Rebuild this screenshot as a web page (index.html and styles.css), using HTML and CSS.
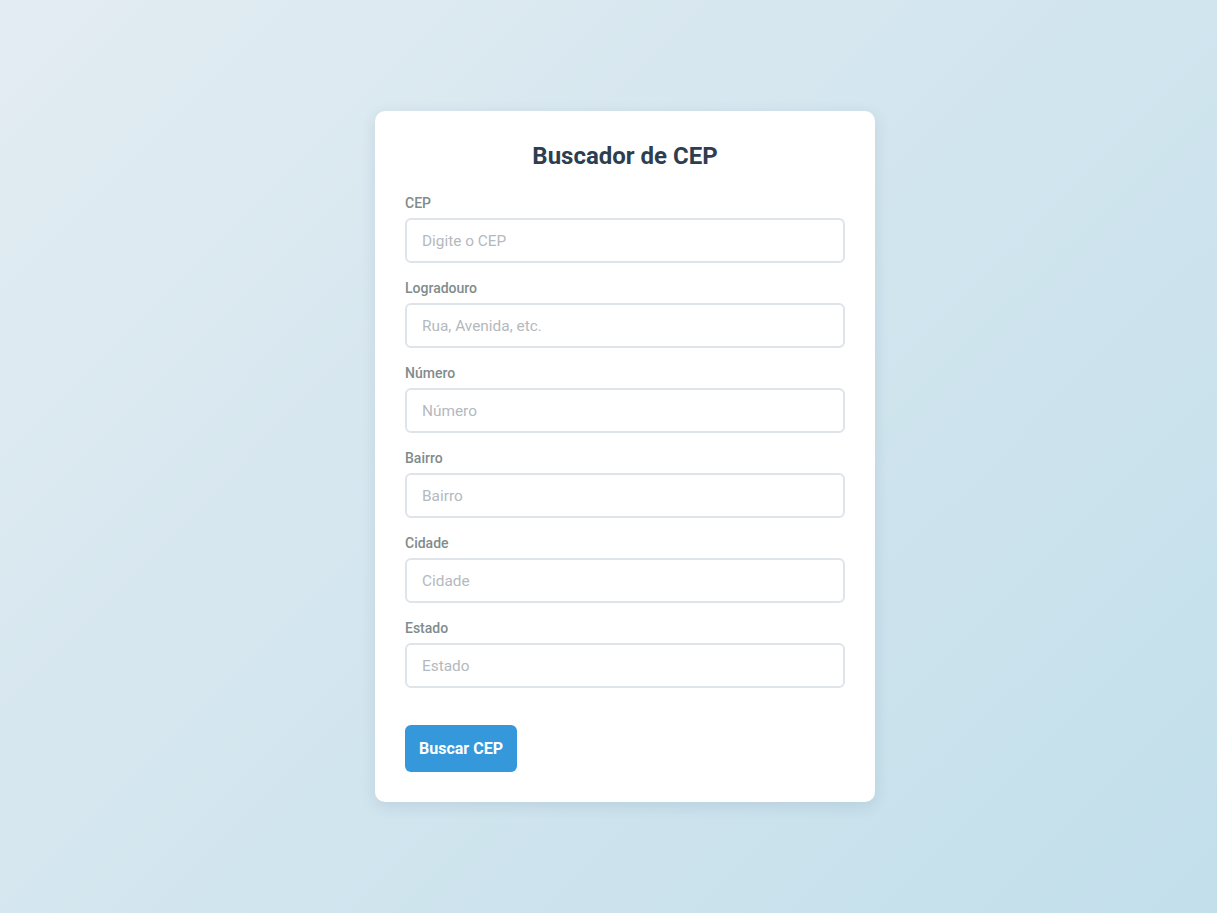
FILE: index.html
```html
<!DOCTYPE html>
<html lang="pt-BR">
<head>
<meta charset="UTF-8">
<title>Buscador de CEP</title>
<link rel="stylesheet" href="styles.css">
</head>
<body>
<main class="page">
  <form class="card">
    <h1 class="title">Buscador de CEP</h1>
    <div class="field">
      <label class="label" for="cep">CEP</label>
      <input class="input" id="cep" type="text" placeholder="Digite o CEP">
    </div>
    <div class="field">
      <label class="label" for="logradouro">Logradouro</label>
      <input class="input" id="logradouro" type="text" placeholder="Rua, Avenida, etc.">
    </div>
    <div class="field">
      <label class="label" for="numero">Número</label>
      <input class="input" id="numero" type="text" placeholder="Número">
    </div>
    <div class="field">
      <label class="label" for="bairro">Bairro</label>
      <input class="input" id="bairro" type="text" placeholder="Bairro">
    </div>
    <div class="field">
      <label class="label" for="cidade">Cidade</label>
      <input class="input" id="cidade" type="text" placeholder="Cidade">
    </div>
    <div class="field">
      <label class="label" for="estado">Estado</label>
      <input class="input" id="estado" type="text" placeholder="Estado">
    </div>
    <button class="button" type="button">Buscar CEP</button>
  </form>
</main>
</body>
</html>
```
FILE: styles.css
```css
* { box-sizing: border-box; }
html, body { margin: 0; padding: 0; height: 100%; }
body {
  font-family: Roboto, "Liberation Sans", sans-serif;
  background: linear-gradient(135deg, #e3ecf2 0%, #c2dfeb 100%);
  min-height: 100vh;
}
.page {
  min-height: 100vh;
  display: flex;
  justify-content: center;
  align-items: flex-start;
  padding-top: 111px;
  padding-left: 33px;
}
.card {
  width: 500px;
  background: #fff;
  border-radius: 10px;
  padding: 30px;
  box-shadow: 0 4px 15px rgba(40, 80, 110, 0.12);
  display: flex;
  flex-direction: column;
}
.title {
  margin: 1px 0 25px;
  text-align: center;
  font-size: 24px;
  line-height: 28px;
  font-weight: 700;
  color: #2c3e50;
}
.field {
  display: flex;
  flex-direction: column;
  gap: 7px;
  margin-bottom: 17px;
}
.label {
  font-size: 14px;
  line-height: 16px;
  font-weight: 500;
  color: #7f8c8d;
}
.input {
  height: 45px;
  border: 2px solid #dfe4ea;
  border-radius: 6px;
  padding: 0 15px;
  font-family: Roboto, "Liberation Sans", sans-serif;
  font-size: 15.4px;
  color: #2c3e50;
  outline: none;
}
.input::placeholder { color: #b4b9be; }
.button {
  align-self: flex-start;
  margin-top: 20px;
  height: 47px;
  width: 112px;
  border: none;
  border-radius: 6px;
  background: #3498db;
  color: #fff;
  font-family: Roboto, "Liberation Sans", sans-serif;
  font-size: 16px;
  font-weight: 700;
  cursor: pointer;
}
```
